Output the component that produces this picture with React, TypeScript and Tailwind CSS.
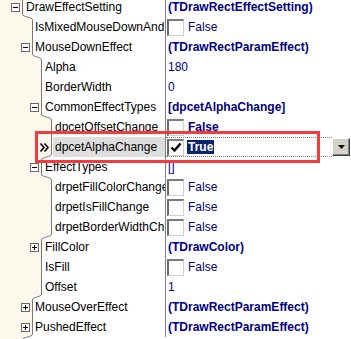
import React from "react";

type Row = {
  name: string;
  level: number;
  box?: "minus" | "plus";
  value?: string;
  bold?: boolean;
  check?: boolean;
  checked?: boolean;
  selected?: boolean;
};

const rows: Row[] = [
  { name: "DrawEffectSetting", level: 0, box: "minus", value: "(TDrawRectEffectSetting)", bold: true },
  { name: "IsMixedMouseDownAnd", level: 1, check: true, value: "False" },
  { name: "MouseDownEffect", level: 1, box: "minus", value: "(TDrawRectParamEffect)", bold: true },
  { name: "Alpha", level: 2, value: "180" },
  { name: "BorderWidth", level: 2, value: "0" },
  { name: "CommonEffectTypes", level: 2, box: "minus", value: "[dpcetAlphaChange]", bold: true },
  { name: "dpcetOffsetChange", level: 3, check: true, value: "False", bold: true },
  { name: "dpcetAlphaChange", level: 3, check: true, checked: true, value: "True", selected: true },
  { name: "EffectTypes", level: 2, box: "minus", value: "[]" },
  { name: "drpetFillColorChange", level: 3, check: true, value: "False" },
  { name: "drpetIsFillChange", level: 3, check: true, value: "False" },
  { name: "drpetBorderWidthCh", level: 3, check: true, value: "False" },
  { name: "FillColor", level: 2, box: "plus", value: "(TDrawColor)", bold: true },
  { name: "IsFill", level: 2, check: true, value: "False" },
  { name: "Offset", level: 2, value: "1" },
  { name: "MouseOverEffect", level: 1, box: "plus", value: "(TDrawRectParamEffect)", bold: true },
  { name: "PushedEffect", level: 1, box: "plus", value: "(TDrawRectParamEffect)", bold: true },
];

// x of the bracket line for each level
const LINE_X = [22, 32, 41, 51];
const TEXT_PAD = ["pl-[2px]", "pl-[1px]", "pl-[2px]", "pl-[2px]"];

function Gutter({ level, prev, next, box, selected }: { level: number; prev: number; next: number; box?: "minus" | "plus"; selected?: boolean }) {
  const a = LINE_X[level] + 0.5;
  const b = LINE_X[next] + 0.5;
  const top = prev !== level ? 3 : 0;
  const bend = next !== level;
  const curve = bend ? ` V17 C${a} 20.5 ${b} 19.5 ${b} 23` : " V20";
  const line = `M${a} ${top}${curve}`;
  const fill = `M0 ${top} H${a}${curve} H0 Z`;
  const bx = LINE_X[level];

  return (
    <svg width={LINE_X[level] + 2} height={20} className="shrink-0 overflow-visible">
      <path d={fill} fill="#fcf8ec" />
      <path d={line} fill="none" stroke="#777" strokeWidth={1} />
      {box && (
        <g>
          <rect x={bx - 10.5} y={6.5} width={8} height={8} fill="#fff" stroke="#6a6a6a" />
          <path d={`M${bx - 9} 10.5 H${bx - 4}`} stroke="#000" />
          {box === "plus" && <path d={`M${bx - 6.5} 8 V13`} stroke="#000" />}
        </g>
      )}
      {selected && (
        <path
          d="M40.5 6.5 L44 10.5 L40.5 14.5 M44.5 6.5 L48 10.5 L44.5 14.5"
          fill="none"
          stroke="#000"
          strokeWidth={1.6}
        />
      )}
    </svg>
  );
}

function CheckBox({ checked }: { checked?: boolean }) {
  return (
    <span className="flex h-[17px] w-[17px] shrink-0 items-center justify-center border-t-2 border-l-2 border-b border-r border-t-[#7c7c7c] border-l-[#6a6a6a] border-b-[#d4d0c8] border-r-[#d4d0c8] bg-white">
      {checked && (
        <svg width={12} height={11} viewBox="0 0 12 11">
          <path d="M1.5 5.5 L4.5 8.5 L10.5 1.5" fill="none" stroke="#000" strokeWidth={2.4} />
        </svg>
      )}
    </span>
  );
}

function ValueCell({ row }: { row: Row }) {
  if (row.selected) {
    return (
      <div className="flex h-5 flex-1 items-stretch border-l border-[#808080]">
        <div className="flex flex-1 items-center border-y border-dotted border-[#808080] pl-[1px]">
          <CheckBox checked={row.checked} />
          <span className="ml-[3px] h-[14px] bg-[#0a246a] px-[1px] text-[12px] font-bold leading-[14px] text-white">
            {row.value}
          </span>
        </div>
        <div className="mt-[1px] flex h-[18px] w-[18px] items-center justify-center border-t border-l border-b border-r border-t-white border-l-white border-b-[#404040] border-r-[#404040] bg-[#d4d0c8] shadow-[inset_-1px_-1px_0_#808080]">
          <svg width={7} height={4} viewBox="0 0 7 4">
            <path d="M0 0 H7 L3.5 4 Z" fill="#000" />
          </svg>
        </div>
        <div className="w-px" />
      </div>
    );
  }
  return (
    <div className="flex h-5 flex-1 items-center border-l border-[#808080] pl-[1px] text-[#000080]">
      {row.check && <CheckBox checked={row.checked} />}
      <span className={`whitespace-nowrap ${row.check ? "ml-[4px]" : "pl-[1px]"} ${row.bold ? "font-bold" : ""}`}>
        {row.value}
      </span>
    </div>
  );
}

export default function App() {
  return (
    <div className="relative h-[339px] w-[351px] overflow-hidden bg-white font-['Liberation_Sans',Arial,sans-serif] text-[12px] leading-5 text-black">
      <div className="-mt-[3px] flex flex-col">
        {rows.map((row, i) => {
          const prev = i === 0 ? row.level : rows[i - 1].level;
          const next = i === rows.length - 1 ? 0 : rows[i + 1].level;
          return (
            <div key={row.name} className="flex h-5">
              <div className="flex w-[165px] shrink-0">
                <Gutter level={row.level} prev={prev} next={next} box={row.box} selected={row.selected} />
                <span
                  className={`min-w-0 flex-1 overflow-hidden whitespace-nowrap ${TEXT_PAD[row.level]} ${
                    row.selected ? "bg-[#dedede]" : ""
                  }`}
                >
                  {row.name}
                </span>
              </div>
              <ValueCell row={row} />
            </div>
          );
        })}
      </div>
      {/* red highlight around the edited row */}
      <div className="absolute left-[35px] top-[131px] h-[32px] w-[285px] border-[3px] border-[#f23b3b]" />
    </div>
  );
}
